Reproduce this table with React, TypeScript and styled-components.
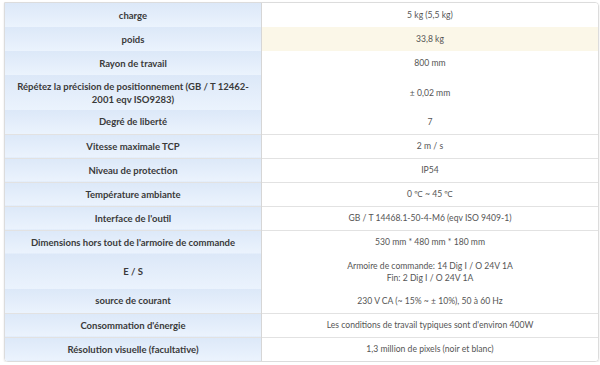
import React from 'react';
import styled, { createGlobalStyle } from 'styled-components';

const GlobalStyle = createGlobalStyle`
  html, body {
    margin: 0;
    padding: 0;
    background: #ffffff;
  }
  body {
    font-family: Lato, "Noto Sans", sans-serif;
  }
`;

const Page = styled.div`
  padding: 2px 3px 0 4px;
`;

const Frame = styled.div`
  width: 593px;
  border: 1px solid #dcdcdc;
  border-radius: 0 4px 4px 4px;
  box-shadow: 0 1px 2px rgba(0, 0, 0, 0.12);
  overflow: hidden;
`;

const Table = styled.table`
  width: 100%;
  border-collapse: collapse;
  table-layout: fixed;
`;

const Row = styled.tr<{ $tall?: boolean; $highlight?: boolean }>`
  height: ${(p) => (p.$tall ? '35px' : '24px')};
  background: ${(p) => (p.$highlight ? '#fbf7e8' : '#ffffff')};

  & + & > * {
    border-top: 1px solid #e2e2e2;
  }
`;

const Label = styled.th`
  width: 240px;
  padding: 0 8px;
  font-size: 9.5px;
  font-weight: 700;
  color: #3a3a3a;
  text-align: center;
  line-height: 13px;
  background: linear-gradient(to bottom, #dce8f8, #ebf3fd);
  border-right: 1px solid #d6d6d6;
`;

const Value = styled.td`
  padding: 0 10px;
  font-size: 8.6px;
  color: #555555;
  text-align: center;
  line-height: 12px;
`;

interface Spec {
  label: string;
  value: React.ReactNode;
  tall?: boolean;
  highlight?: boolean;
}

const specs: Spec[] = [
  { label: 'charge', value: '5 kg (5,5 kg)' },
  { label: 'poids', value: '33,8 kg', highlight: true },
  { label: 'Rayon de travail', value: '800 mm' },
  {
    label: 'Répétez la précision de positionnement (GB / T 12462-2001 eqv ISO9283)',
    value: '± 0,02 mm',
    tall: true,
  },
  { label: 'Degré de liberté', value: '7' },
  { label: 'Vitesse maximale TCP', value: '2 m / s' },
  { label: 'Niveau de protection', value: 'IP54' },
  { label: 'Température ambiante', value: '0 ℃ ~ 45 ℃' },
  { label: "Interface de l'outil", value: 'GB / T 14468.1-50-4-M6 (eqv ISO 9409-1)' },
  { label: "Dimensions hors tout de l'armoire de commande", value: '530 mm * 480 mm * 180 mm' },
  {
    label: 'E / S',
    value: (
      <>
        Armoire de commande: 14 Dig I / O 24V 1A
        <br />
        Fin: 2 Dig I / O 24V 1A
      </>
    ),
    tall: true,
  },
  { label: 'source de courant', value: '230 V CA (~ 15% ~ ± 10%), 50 à 60 Hz' },
  { label: "Consommation d'énergie", value: "Les conditions de travail typiques sont d'environ 400W" },
  { label: 'Résolution visuelle (facultative)', value: '1,3 million de pixels (noir et blanc)' },
];

const App: React.FC = () => (
  <>
    <GlobalStyle />
    <Page>
      <Frame>
        <Table>
          <tbody>
            {specs.map((s) => (
              <Row key={s.label} $tall={s.tall} $highlight={s.highlight}>
                <Label>{s.label}</Label>
                <Value>{s.value}</Value>
              </Row>
            ))}
          </tbody>
        </Table>
      </Frame>
    </Page>
  </>
);

export default App;
